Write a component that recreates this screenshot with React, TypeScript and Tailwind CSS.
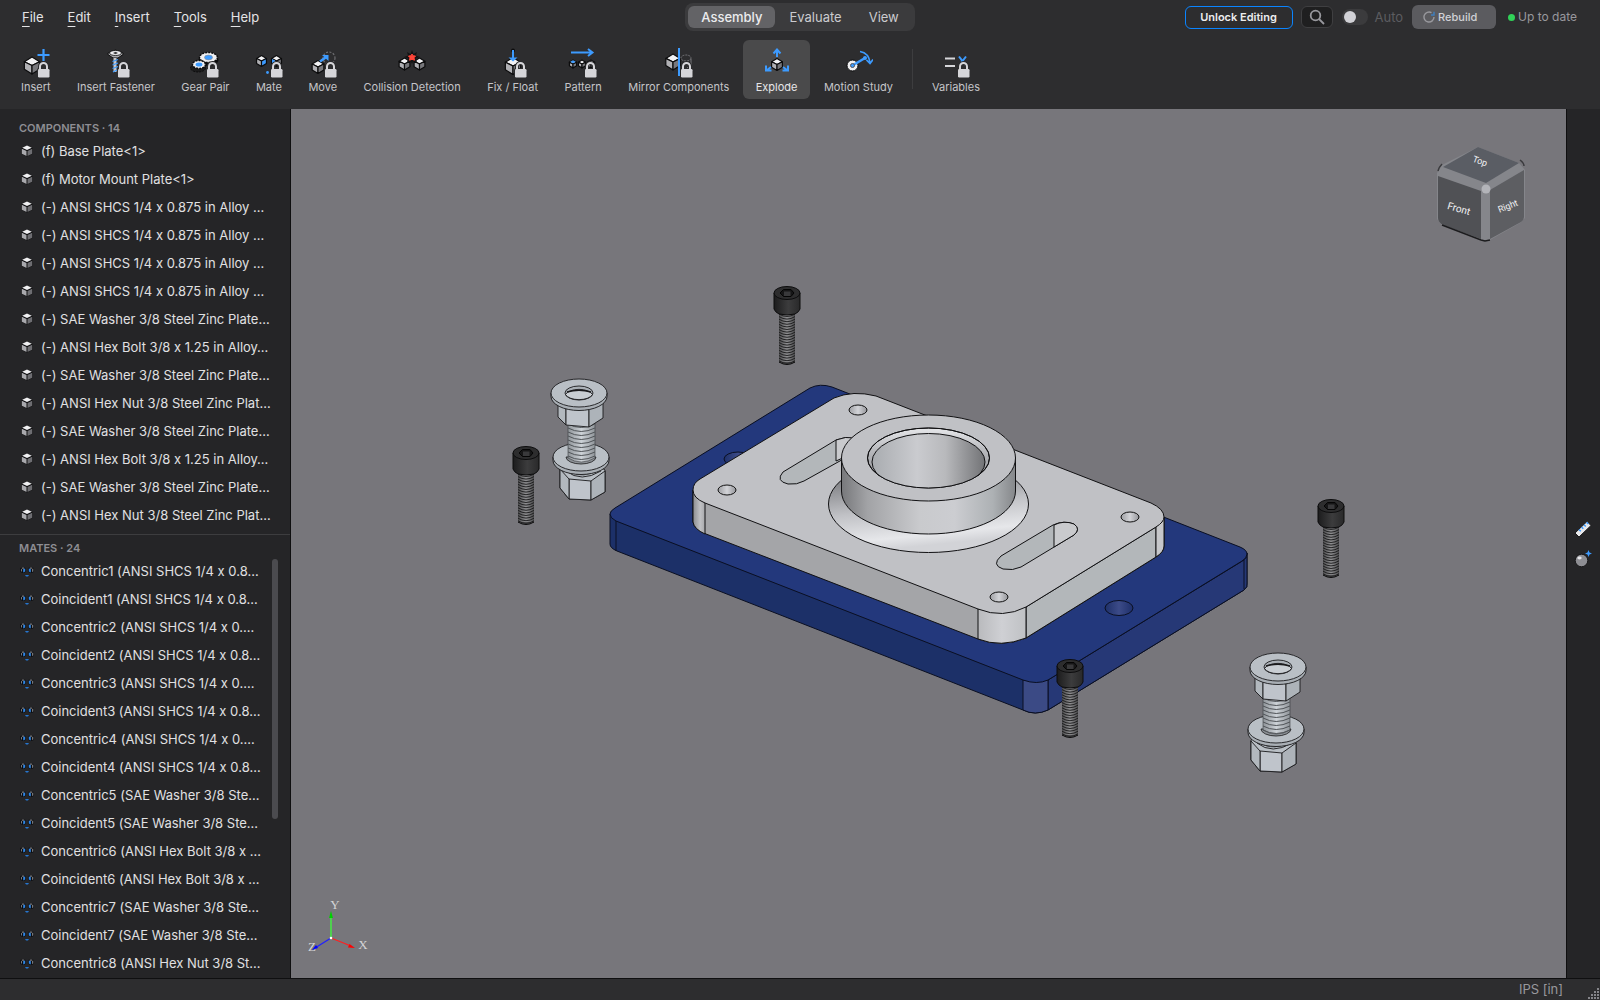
import type { ReactNode } from 'react';
import { useState } from 'react';

const menus = ['File', 'Edit', 'Insert', 'Tools', 'Help'];
const tabs = ['Assembly', 'Evaluate', 'View'];

const components = [
  '(f) Base Plate<1>',
  '(f) Motor Mount Plate<1>',
  '(-) ANSI SHCS 1/4 x 0.875 in Alloy …',
  '(-) ANSI SHCS 1/4 x 0.875 in Alloy …',
  '(-) ANSI SHCS 1/4 x 0.875 in Alloy …',
  '(-) ANSI SHCS 1/4 x 0.875 in Alloy …',
  '(-) SAE Washer 3/8 Steel Zinc Plate…',
  '(-) ANSI Hex Bolt 3/8 x 1.25 in Alloy…',
  '(-) SAE Washer 3/8 Steel Zinc Plate…',
  '(-) ANSI Hex Nut 3/8 Steel Zinc Plat…',
  '(-) SAE Washer 3/8 Steel Zinc Plate…',
  '(-) ANSI Hex Bolt 3/8 x 1.25 in Alloy…',
  '(-) SAE Washer 3/8 Steel Zinc Plate…',
  '(-) ANSI Hex Nut 3/8 Steel Zinc Plat…',
];

const mates = [
  'Concentric1 (ANSI SHCS 1/4 x 0.8…',
  'Coincident1 (ANSI SHCS 1/4 x 0.8…',
  'Concentric2 (ANSI SHCS 1/4 x 0.…',
  'Coincident2 (ANSI SHCS 1/4 x 0.8…',
  'Concentric3 (ANSI SHCS 1/4 x 0.…',
  'Coincident3 (ANSI SHCS 1/4 x 0.8…',
  'Concentric4 (ANSI SHCS 1/4 x 0.…',
  'Coincident4 (ANSI SHCS 1/4 x 0.8…',
  'Concentric5 (SAE Washer 3/8 Ste…',
  'Coincident5 (SAE Washer 3/8 Ste…',
  'Concentric6 (ANSI Hex Bolt 3/8 x …',
  'Coincident6 (ANSI Hex Bolt 3/8 x …',
  'Concentric7 (SAE Washer 3/8 Ste…',
  'Coincident7 (SAE Washer 3/8 Ste…',
  'Concentric8 (ANSI Hex Nut 3/8 St…',
];

const BLUE = '#3d9bff';

function Cube({ x, y, r, right = '#77777b' }: { x: number; y: number; r: number; right?: string }) {
  const w = r * 0.9;
  const h = r * 0.45;
  return (
    <g transform={`translate(${x} ${y})`} stroke="#0c0c0d" strokeWidth="1.2" strokeLinejoin="round">
      <path d={`M0 ${-r}L${w} ${-h}L0 0L${-w} ${-h}Z`} fill="#f2f2f4" />
      <path d={`M${-w} ${-h}L0 0V${r}L${-w} ${h}Z`} fill="#b0b0b4" />
      <path d={`M${w} ${-h}L0 0V${r}L${w} ${h}Z`} fill={right} />
    </g>
  );
}

function Lock() {
  return (
    <g>
      <path d="M19 22V18.500a3.500 3.500 0 0 1 7 0V22" fill="none" stroke="#2d2d2f" strokeWidth="4" />
      <rect x="16" y="20" width="13" height="10" rx="2" fill="#2d2d2f" />
      <path d="M19 22V18.500a3.500 3.500 0 0 1 7 0V22" fill="none" stroke="#d6d6da" strokeWidth="2" />
      <rect x="17" y="21" width="11.500" height="8.500" rx="1.200" fill="#d6d6da" />
    </g>
  );
}

type Tool = { label: string; icon: ReactNode; locked?: boolean; active?: boolean };

const tools: Tool[] = [
  {
    label: 'Insert',
    locked: true,
    icon: (
      <>
        <Cube x={11} y={17.5} r={8.5} />
        <path d="M22.500 1V13M16.500 7H28.500" stroke={BLUE} strokeWidth="2.200" />
      </>
    ),
  },
  {
    label: 'Insert Fastener',
    locked: true,
    icon: (
      <>
        <path d="M7 5L14.500 2L22 5V6.500L17 10H12L7 6.500Z" fill="#a9a9ad" stroke="#0c0c0d" />
        <ellipse cx="14.500" cy="5" rx="6" ry="2.500" fill="#ededf0" stroke="#0c0c0d" strokeWidth=".8" />
        <path d="M12 5l2.500-1.200L17 5l-2.500 1.200Z" fill="#3a3a3c" />
        <path d="M14 10V24" stroke="#c8c8cc" strokeWidth="3" />
        <path d="M11.500 13.500l5.500-2M11.500 17l5.500-2M11.500 20.500l5.500-2M12 24l4-2" stroke={BLUE} strokeWidth="1.300" />
      </>
    ),
  },
  {
    label: 'Gear Pair',
    locked: true,
    icon: (
      <>
        <ellipse cx="8" cy="20" rx="7.500" ry="4" fill="#1b1b1c" stroke="#0c0c0d" strokeDasharray="2 1" />
        <ellipse cx="18.500" cy="12" rx="10" ry="6" fill="#0c0c0d" />
        <ellipse cx="18.500" cy="9.500" rx="9" ry="5" fill="#f0f0f2" stroke="#0c0c0d" strokeWidth="1.500" strokeDasharray="2 1" />
        <ellipse cx="18.500" cy="9.500" rx="4" ry="2.400" fill={BLUE} stroke="#8a8a8e" strokeWidth=".6" />
        <ellipse cx="9" cy="16.500" rx="6.500" ry="4" fill="#f0f0f2" stroke="#0c0c0d" strokeWidth="1.500" strokeDasharray="2 1" />
        <ellipse cx="9" cy="16.500" rx="3.400" ry="2.100" fill={BLUE} />
      </>
    ),
  },
  {
    label: 'Mate',
    locked: true,
    icon: (
      <>
        <Cube x={7.5} y={13} r={5.5} right={BLUE} />
        <Cube x={22.5} y={13} r={5.5} />
        <path d="M18 11l3 1.500v4l-3-1.500z" fill={BLUE} />
        <circle cx="13.500" cy="24.500" r="1.400" fill={BLUE} />
      </>
    ),
  },
  {
    label: 'Move',
    locked: true,
    icon: (
      <>
        <circle cx="21" cy="10" r="6" fill="none" stroke="#6e6e72" strokeWidth="1.200" strokeDasharray="2 1.500" />
        <Cube x={10} y={19} r={6.5} />
        <path d="M12 13.500L19 8.500" stroke={BLUE} strokeWidth="2.500" />
        <path d="M14 7h6.500v6z" fill={BLUE} />
      </>
    ),
  },
  {
    label: 'Collision Detection',
    icon: (
      <>
        <Cube x={7.5} y={16} r={6} />
        <Cube x={22.5} y={16} r={6} />
        <path
          d="M15 2l1.500 4 3.500-2-1 3.500L23 9l-4 1.500 1 4-3.500-1.500L15 16l-1.500-3L10 14.500l1-4L7 9l4-1.500L10 4l3.500 2z"
          fill="#141415"
        />
        <path d="M15 6l1 1.800 2.500.2-1.500 1.800.5 2.400-2.500-.9-2.500.9.5-2.400L11.500 8l2.500-.2z" fill="#ff4539" stroke="#ff4539" />
      </>
    ),
  },
  {
    label: 'Fix / Float',
    locked: true,
    icon: (
      <>
        <Cube x={15} y={18} r={8.5} />
        <circle cx="15" cy="2.500" r="2" fill="#0c0c0d" />
        <path d="M15 2V11" stroke={BLUE} strokeWidth="2" />
        <path d="M10.500 9.500h9L15 13.500z" fill={BLUE} />
      </>
    ),
  },
  {
    label: 'Pattern',
    locked: true,
    icon: (
      <>
        <path d="M3 4.500H24M20 1l4.500 3.500L20 8" fill="none" stroke={BLUE} strokeWidth="2" />
        <Cube x={5} y={16} r={4} />
        <Cube x={14} y={16} r={4} />
        <Cube x={23} y={16} r={4} />
        <path d="M5 12.200l2.800 1.600L5 15.300l-2.800-1.500z" fill={BLUE} />
      </>
    ),
  },
  {
    label: 'Mirror Components',
    locked: true,
    icon: (
      <>
        <Cube x={9} y={14} r={8} />
        <ellipse cx="22" cy="10" rx="5" ry="3" fill="none" stroke="#77777b" strokeDasharray="2 1" />
        <path d="M27 11v6l-4 3" fill="none" stroke="#77777b" />
        <path d="M15 0V28" stroke={BLUE} strokeWidth="2" />
      </>
    ),
  },
  {
    label: 'Explode',
    active: true,
    icon: (
      <>
        <Cube x={15} y={16.5} r={6} />
        <path d="M15 9V2M11.500 5.500L15 1.500l3.500 4" fill="none" stroke={BLUE} strokeWidth="2" />
        <path d="M9 19L4.500 22.500M4 17.500v5h5.500" fill="none" stroke={BLUE} strokeWidth="2" />
        <path d="M21 19L25.500 22.500M26 17.500v5h-5.500" fill="none" stroke={BLUE} strokeWidth="2" />
      </>
    ),
  },
  {
    label: 'Motion Study',
    icon: (
      <>
        <circle cx="9.500" cy="17.500" r="5.500" fill="#f0f0f2" stroke="#0c0c0d" />
        <path d="M9.500 17.500L22 10" stroke={BLUE} strokeWidth="2.600" />
        <circle cx="9.500" cy="17.500" r="2" fill={BLUE} stroke="#55555a" />
        <circle cx="22" cy="10" r="2" fill={BLUE} />
        <path d="M17 3.500Q26 5 27 15M23.500 12l3.500 3.500 3-4" fill="none" stroke={BLUE} strokeWidth="1.700" />
      </>
    ),
  },
  {
    label: 'Variables',
    locked: true,
    icon: (
      <>
        <path d="M4 10.500H14M4 18H14" stroke="#d6d6da" strokeWidth="1.800" />
        <path d="M18 8.500l3.500 4.500L25 8.500M21.500 13l-3 4M21.500 13l3 4" fill="none" stroke={BLUE} strokeWidth="2" />
      </>
    ),
  },
];

function ToolButton({ tool }: { tool: Tool }) {
  return (
    <button
      className={`flex h-[59px] flex-col items-center rounded-md px-[13px] pt-2 ${tool.active ? 'bg-[#4a4a4b] text-[#e6e6e8]' : 'text-[#c5c5c9]'}`}
    >
      <svg viewBox="0 0 30 30" className="-mx-2 h-[30px] w-[30px]" aria-hidden="true">
        {tool.icon}
        {tool.locked && <Lock />}
      </svg>
      <span className="whitespace-nowrap text-[11px] leading-[18px]">{tool.label}</span>
    </button>
  );
}

function Header() {
  const [tab, setTab] = useState('Assembly');
  const [auto, setAuto] = useState(false);

  return (
    <header className="h-[109px] shrink-0 bg-[#2d2d2f]">
      <div className="grid h-[34px] grid-cols-[1fr_auto_1fr] items-center">
        <nav className="flex pl-[10px] pt-[2px] text-[13px] text-[#e4e4e6]">
          {menus.map((menu) => (
            <button key={menu} className="px-3">
              <span className="underline underline-offset-4">{menu[0]}</span>
              {menu.slice(1)}
            </button>
          ))}
        </nav>

        <div className="flex gap-px rounded-lg bg-[#3b3b3d] p-[3px] text-[13px]">
          {tabs.map((name) => (
            <button
              key={name}
              onClick={() => setTab(name)}
              className={`h-[22px] rounded-md px-[13px] pt-[2px] ${tab === name ? 'bg-[#636366] font-medium text-[#ececee]' : 'text-[#cbcbcf]'}`}
            >
              {name}
            </button>
          ))}
        </div>

        <div className="flex items-center justify-end pr-[23px]">
          <button className="mr-2 h-[23px] w-[108px] rounded-md border border-[#0a84ff] text-[11px] font-semibold text-[#ececee]">
            Unlock Editing
          </button>
          <button
            aria-label="Search"
            className="mr-[9px] flex h-[22px] w-8 items-center justify-center rounded-md border border-[#3f3f41] bg-[#1f1f20]"
          >
            <svg viewBox="0 0 16 16" className="h-4 w-4" fill="none" stroke="#98989d" strokeWidth="1.8">
              <circle cx="6.500" cy="6.500" r="4.800" />
              <path d="M10 10l5 5" />
            </svg>
          </button>
          <label className="mr-[9px] flex items-center gap-[7px] text-[13px] text-[#5c5c60]">
            <input
              type="checkbox"
              checked={auto}
              onChange={(e) => setAuto(e.target.checked)}
              className="h-4 w-[26px] appearance-none rounded-full bg-[#3b3b3d] p-[2px] before:block before:h-3 before:w-3 before:rounded-full before:bg-[#d1d1d6] before:content-[''] checked:bg-[#0a84ff] checked:before:ml-[10px]"
            />
            <span className="pt-[2px]">Auto</span>
          </label>
          <button className="mr-3 flex h-6 w-[84px] items-center gap-[3px] rounded-md bg-[#5b5b5f] pl-[11px] text-[11px] font-medium text-[#d1d1d6]">
            <svg viewBox="0 0 12 12" className="h-3 w-3" fill="none" strokeWidth="1.4">
              <path d="M8.500 1.700A5 5 0 1 0 11 6" stroke="#98989d" />
              <path d="M8 4h3V.800" stroke="#3f7fbf" />
            </svg>
            Rebuild
          </button>
          <span className="mr-[3px] h-[7px] w-[7px] rounded-full bg-[#30d158]"></span>
          <span className="text-xs text-[#98989d]">Up to date</span>
        </div>
      </div>

      <div className="flex pl-2 pt-[6px]">
        <div className="flex w-[898px] justify-between">
          {tools.slice(0, 11).map((tool) => (
            <ToolButton key={tool.label} tool={tool} />
          ))}
        </div>
        <div className="mx-[6px] mt-[9px] h-10 w-px bg-[#3d3d3f]"></div>
        <ToolButton tool={tools[11]} />
      </div>
    </header>
  );
}

function PartIcon() {
  return (
    <svg viewBox="0 0 12 12" className="h-3 w-3 shrink-0" aria-hidden="true">
      <path d="M6 .500L11.500 3v6L6 11.500.500 9V3z" fill="#0c0c0d" />
      <path d="M6 .600l4.800 2.200L6 5 1.200 2.800z" fill="#f0f0f2" />
      <path d="M.800 3.800l4.700 2.100v5L.800 8.800z" fill="#a9a9ad" />
      <path d="M11.200 3.800L6.500 5.900v5l4.700-2.100z" fill="#6e6e72" />
    </svg>
  );
}

function MateIcon() {
  return (
    <svg viewBox="0 0 14 12" className="h-3 w-[14px] shrink-0" aria-hidden="true">
      <path d="M3 2l2.800 1v4L3 8 .300 7V3zM11 2l2.800 1v4L11 8 8.300 7V3z" fill="#0c0c0d" />
      <path d="M1.500 3l1.500-.6 1.500.6L3 3.800zM9.500 3l1.500-.6 1.500.6-1.500.8z" fill="#b0b0b4" />
      <path d="M3.200 4l2-.6v3l-2 1zM10.800 4l-2-.6v3l2 1z" fill="#2f86e6" />
      <path d="M12 4l1.300-.4v2.800L12 7zM1 3.800l1 .4v2.600L1 6.300z" fill="#77777b" />
      <path d="M5 10h4l-1 1.400H6z" fill="#2676cf" />
    </svg>
  );
}

function TreeList({ items, icon, indent }: { items: string[]; icon: ReactNode; indent: string }) {
  return (
    <ul>
      {items.map((item, index) => (
        <li key={index} className={`flex h-7 items-center ${indent} text-[13px] text-[#e0e0e2]`}>
          {icon}
          <span className="truncate pt-[2px]">{item}</span>
        </li>
      ))}
    </ul>
  );
}

function Sidebar() {
  return (
    <aside className="flex w-[291px] shrink-0 flex-col border-r border-[#0f0f10] bg-[#252527]">
      <section className="shrink-0 border-b border-[#3d3d3f] pb-[5px] pt-[9px]">
        <h2 className="h-[19px] pl-[19px] text-[11px] font-semibold leading-[20px] text-[#8e8e93]">
          COMPONENTS · {components.length}
        </h2>
        <TreeList items={components} icon={<PartIcon />} indent="gap-2 pl-[21px]" />
      </section>
      <section className="relative min-h-0 flex-1 overflow-hidden pt-[3px]">
        <h2 className="h-[19px] pl-[19px] text-[11px] font-semibold leading-[20px] text-[#8e8e93]">MATES · 24</h2>
        <TreeList items={mates} icon={<MateIcon />} indent="gap-[7px] pl-5" />
        <div className="absolute right-3 top-6 h-[260px] w-[6px] rounded-full bg-[#4b4b4f]"></div>
      </section>
    </aside>
  );
}

// socket head cap screw, origin at the centre of the head's top face
function CapScrew({ x, y }: { x: number; y: number }) {
  return (
    <g transform={`translate(${x} ${y})`}>
      <rect x="-8" y="17" width="16" height="53" fill="url(#threadDark)" />
      <path d="M-8 69Q0 74 8 69" fill="#58585a" stroke="#0c0c0d" />
      {Array.from({ length: 19 }, (_, i) => (
        <path key={i} d={`M-8 ${21 + i * 2.6}Q0 ${26 + i * 2.6} 8 ${21 + i * 2.6}`} fill="none" stroke="#1a1a1b" strokeWidth=".9" />
      ))}
      <path d="M-13 0V16Q-12 19 -8 21Q0 23 8 21Q12 19 13 16V0Z" fill="url(#headDark)" stroke="#0c0c0d" />
      <ellipse rx="13" ry="6.500" fill="#2d2d2e" stroke="#0c0c0d" />
      <path d="M-7 0L-3.500-3.500H4L7 0 4 3.500H-3.500Z" fill="#161617" stroke="#050505" />
      <path d="M-3 3V-1.500H3.500V3Z" fill="#39393b" />
    </g>
  );
}

function Washer({ x, y, hole }: { x: number; y: number; hole?: boolean }) {
  return (
    <g transform={`translate(${x} ${y})`} stroke="#1a1a1c" strokeWidth=".9">
      <path d="M-28 0V3.500A28 14 0 0 0 28 3.500V0Z" fill="#a9afb5" />
      <ellipse rx="28" ry="14" fill="#b9bfc5" />
      {hole && (
        <>
          <ellipse rx="14" ry="7" fill="#aab0b6" />
          <path d="M-13.500 1.500A14 7 0 0 1 13.500 1.500A14 7 0 0 1 -13.500 1.500Z" fill="#c9ced3" />
          <path d="M-12-1Q0-4.500 12-1" fill="none" strokeWidth="1.500" />
        </>
      )}
    </g>
  );
}

// washer + nut on top, washer + bolt head below, joined by the shank
function BoltStack({ x, y, nutX, lowX, lowY, headX }: { x: number; y: number; nutX: number; lowX: number; lowY: number; headX: number }) {
  return (
    <g transform={`translate(${x} ${y})`}>
      <g transform={`translate(${lowX + headX} ${lowY})`} stroke="#1a1a1c" strokeWidth=".9" strokeLinejoin="round">
        <path d="M-21 11L-12 5H12L24 13V35L10 43L-12 42L-21 31Z" fill="#b9bfc5" />
        <path d="M-12 22L10 24V43L-12 42Z" fill="#bfc4cb" />
        <path d="M10 24L24 14V35L10 43Z" fill="#adb3b9" />
        <path d="M-21 12L-12 22V42L-21 31Z" fill="#b2b8be" />
        <path d="M-15 14Q0 26 20 14" fill="none" />
        <path d="M-10 15Q2 22 16 13" fill="none" stroke="#55585c" />
      </g>
      <Washer x={lowX} y={lowY} />
      <path d={`M${lowX - 15} ${lowY}A15 7 0 0 0 ${lowX + 15} ${lowY}Z`} fill="#8d9297" stroke="#1a1a1c" strokeWidth=".8" />
      <path d={`M${lowX - 13} 28V${lowY + 1}Q${lowX} ${lowY + 9} ${lowX + 14} ${lowY + 1}V28Z`} fill="url(#thread)" stroke="#3a3c3f" strokeWidth=".6" />
      {Array.from({ length: 9 }, (_, i) => (
        <path
          key={i}
          d={`M${lowX - 13} ${31 + i * 4}Q${lowX} ${38 + i * 4} ${lowX + 14} ${31 + i * 4}`}
          fill="none"
          stroke="#505458"
          strokeWidth="1"
        />
      ))}
      <g transform={`translate(${nutX} 0)`} stroke="#1a1a1c" strokeWidth=".9" strokeLinejoin="round">
        <path d="M-21 8V24L-13 32V10Z" fill="#b2b8be" />
        <path d="M-13 10V32L10 34V10Z" fill="#bfc4cb" />
        <path d="M10 10V34L24 25V8Z" fill="#adb3b9" />
      </g>
      <Washer x={0} y={0} hole />
    </g>
  );
}

function SmallHole({ x, y }: { x: number; y: number }) {
  return (
    <ellipse cx={x} cy={y} rx="9" ry="5" fill="url(#hole)" stroke="#111" />
  );
}

function Model() {
  return (
    <svg viewBox="291 109 1275 869" className="h-full w-full" role="img" aria-label="Exploded motor mount assembly">
      <defs>
        <linearGradient id="headDark">
          <stop offset="0" stopColor="#1c1c1d" />
          <stop offset=".55" stopColor="#3c3c3d" />
          <stop offset="1" stopColor="#29292a" />
        </linearGradient>
        <linearGradient id="threadDark">
          <stop offset="0" stopColor="#4a4a4c" />
          <stop offset=".5" stopColor="#909092" />
          <stop offset="1" stopColor="#4a4a4c" />
        </linearGradient>
        <linearGradient id="thread">
          <stop offset="0" stopColor="#8f9499" />
          <stop offset=".5" stopColor="#cdd2d7" />
          <stop offset="1" stopColor="#8f9499" />
        </linearGradient>
        <linearGradient id="hole">
          <stop offset="0" stopColor="#9d9ea2" />
          <stop offset=".5" stopColor="#d3d4d8" />
          <stop offset="1" stopColor="#94959a" />
        </linearGradient>
        <linearGradient id="blueHole">
          <stop offset="0" stopColor="#1e3069" />
          <stop offset=".5" stopColor="#3c4b88" />
          <stop offset="1" stopColor="#1e2f6a" />
        </linearGradient>
        <linearGradient id="boss">
          <stop offset="0" stopColor="#77787b" />
          <stop offset=".15" stopColor="#a2a3a6" />
          <stop offset=".45" stopColor="#c9cacd" />
          <stop offset=".65" stopColor="#cccdd1" />
          <stop offset=".87" stopColor="#adb1b4" />
          <stop offset="1" stopColor="#85878a" />
        </linearGradient>
        <linearGradient id="bore">
          <stop offset="0" stopColor="#a9acb0" />
          <stop offset=".4" stopColor="#cacbcf" />
          <stop offset=".65" stopColor="#b8b9bc" />
          <stop offset="1" stopColor="#727376" />
        </linearGradient>
        <linearGradient id="fillet" x1="0" y1="0.3" x2="0.15" y2="1">
          <stop offset="0" stopColor="#85868a" />
          <stop offset=".45" stopColor="#c0c1c5" />
          <stop offset=".85" stopColor="#e6e7ea" />
          <stop offset="1" stopColor="#d2d3d7" />
        </linearGradient>
        <linearGradient id="chamfer" x1="0" y1="0" x2="0" y2="1">
          <stop offset="0" stopColor="#e6e7ea" />
          <stop offset=".4" stopColor="#b5b6ba" />
          <stop offset="1" stopColor="#8b8c90" />
        </linearGradient>
        <linearGradient id="corner">
          <stop offset="0" stopColor="#b9babd" />
          <stop offset=".5" stopColor="#cfd0d4" />
          <stop offset="1" stopColor="#bfc1c4" />
        </linearGradient>
        <linearGradient id="leftCorner">
          <stop offset="0" stopColor="#8c8d90" />
          <stop offset=".6" stopColor="#c0c1c4" />
          <stop offset="1" stopColor="#a8a9ac" />
        </linearGradient>
      </defs>

      {/* base plate */}
      <g stroke="#0a0f22" strokeWidth="1" strokeLinejoin="round">
        <path d="M610 514V544Q610 548 617 551L1023 710Q1035 716 1048 710L1244 590Q1248 587 1247 583V553Z" fill="#1c3068" />
        <path d="M1048 680L1244 560Q1247 558 1247 553V583Q1248 587 1244 590L1048 710Z" fill="#263876" />
        <path d="M1023 680V710Q1035 716 1048 710V680Z" fill="#3b4a85" />
        <path
          d="M610 514Q610 511 615 508L810 388Q820 383 832 387L1240 547Q1247 550 1247 554Q1247 558 1242 561L1048 680Q1037 685 1023 680L616 521Q610 518 610 514Z"
          fill="#23387c"
        />
        <path d="M616 521V551M1244 560V589" />
        <ellipse cx="738" cy="459" rx="14" ry="7" fill="url(#blueHole)" />
        <ellipse cx="1119" cy="608" rx="14" ry="7.500" fill="url(#blueHole)" />
      </g>

      {/* motor mount plate */}
      <g stroke="#111113" strokeWidth="1" strokeLinejoin="round">
        <path d="M693 490V522Q694 529 706 534L978 639Q1001 648 1026 638L1156 557Q1164 552 1164 546V517Z" fill="#a4a5a8" />
        <path d="M693 490V522Q694 529 705 534V503Z" fill="url(#leftCorner)" />
        <path d="M1026 607L1156 527V557L1026 638Z" fill="#b3b7ba" />
        <path d="M1156 527L1164 517V546Q1164 552 1156 557Z" fill="#c6c7ca" />
        <path d="M978 609V639Q1001 648 1026 638V607Z" fill="url(#corner)" />
        <path
          d="M693 490Q693 483 700 479L834 398Q853 390 876 396L1151 503Q1164 509 1164 517Q1164 522 1156 527L1026 607Q1003 619 978 609L705 503Q693 498 693 490Z"
          fill="#c0c1c5"
        />
        <SmallHole x={858} y={410} />
        <SmallHole x={727} y={490} />
        <SmallHole x={1130} y={517} />
        <SmallHole x={999} y={597} />

        <path d="M783 472L836 440Q845 436 856 438V452L804 481Q797 485 788 484Q775 481 783 472Z" fill="#b3b7ba" />
        <path d="M836 440Q845 436 856 438V452L836 461Z" fill="#c9cacd" />
        <path d="M1001 556L1053 525Q1064 520 1074 524Q1081 529 1074 535L1021 567Q1013 571 1003 569Q991 565 1001 556Z" fill="#b3b7ba" />
        <path d="M1054 525Q1064 520 1074 524Q1081 529 1074 535L1054 547Z" fill="#c9cacd" />

        <ellipse cx="928.500" cy="504" rx="100" ry="48.500" fill="url(#fillet)" />
        <path d="M841.500 458V491A87 43 0 0 0 1015.500 491V458Z" fill="url(#boss)" />
        <ellipse cx="928.500" cy="458" rx="87" ry="43" fill="#c0c1c5" />
        <ellipse cx="928.500" cy="458" rx="61" ry="30" fill="url(#chamfer)" />
        <clipPath id="boreClip">
          <ellipse cx="928.500" cy="458" rx="61" ry="30" />
        </clipPath>
        <ellipse cx="928.500" cy="462" rx="56.500" ry="28.500" fill="url(#bore)" clipPath="url(#boreClip)" />
        <ellipse cx="928.500" cy="458" rx="61" ry="30" fill="none" />
      </g>

      <BoltStack x={579} y={393} nutX={0} lowX={2} lowY={64} headX={0} />
      <BoltStack x={1278} y={667} nutX={-2} lowX={-2} lowY={62} headX={-4} />
      <CapScrew x={787} y={293} />
      <CapScrew x={526} y={453} />
      <CapScrew x={1070} y={666} />
      <CapScrew x={1331} y={506} />
    </svg>
  );
}

function ViewCube() {
  return (
    <svg viewBox="0 0 104 112" className="absolute right-8 top-7 h-[112px] w-[104px]" aria-label="View cube">
      <path d="M48 10L89 26 95 33V81L90 86 60 103 52 104 12 88 7 82V36L12 28Z" fill="#85868b" />
      <path d="M48 10L89 26 56 46 13 30Z" fill="#5a5d64" />
      <path d="M8 39L51 54V102L13 88Q8 85 8 81Z" fill="#505155" />
      <path d="M60 53L94 33V80Q94 83 91 85L60 102Z" fill="#5d5e62" />
      <path d="M12 88L51 103 55 104 60 103" fill="none" stroke="#1c1c1e" strokeWidth="1.5" />
      <path d="M8 34Q9 30 12 27M90 23Q94 26 94 29" fill="none" stroke="#3a3a3d" strokeWidth="1.500" />
      <circle cx="56" cy="52" r="4.500" fill="#b3b4b9" />
      <g fill="#f2f2f4" fontSize="10" fontFamily="Roboto, 'Noto Sans', sans-serif" textAnchor="middle">
        <text transform="translate(49 27) rotate(20)" fontSize="9">
          Top
        </text>
        <text transform="translate(28 75) rotate(16)">Front</text>
        <text transform="translate(79 72) rotate(-22)" fontSize="9">
          Right
        </text>
      </g>
    </svg>
  );
}

function AxisTriad() {
  return (
    <svg viewBox="0 0 72 72" className="absolute bottom-4 left-3 h-[72px] w-[72px]" aria-label="Axis triad">
      <path d="M28 48V24" stroke="#4fd04f" strokeWidth="2" />
      <path d="M28 21l2 7h-4z" fill="#00d000" />
      <path d="M28 48L48 56" stroke="#ff2020" strokeWidth="1.300" />
      <path d="M52 58l-7-.5 1.500-3.500z" fill="#ff0000" />
      <path d="M28 48L12 58" stroke="#2020ff" strokeWidth="1.300" />
      <path d="M9 60l4-5 2 3z" fill="#0000ff" />
      <circle cx="28" cy="48" r="1.300" fill="#fff" />
      <g fill="#d4d4d6" fontSize="13" fontFamily="'Liberation Serif', serif" textAnchor="middle">
        <text x="32" y="19">Y</text>
        <text x="60" y="59">X</text>
        <text x="9" y="61">Z</text>
      </g>
    </svg>
  );
}

function Dock() {
  return (
    <aside className="flex w-[34px] shrink-0 flex-col items-center justify-center gap-3 border-l border-[#0f0f10] bg-[#252527] pr-px">
      <button aria-label="Measure">
        <svg viewBox="0 0 18 18" className="h-[18px] w-[18px]">
          <path d="M1 13L13 1.500 17 5.500 5 17Z" fill="#e8e8ea" stroke="#1a1a1b" />
          <path d="M5 9.500l1.800 1.800M7.500 7l1.800 1.800M10 4.700l1.800 1.800M12.500 2.300L14.300 4" stroke={BLUE} strokeWidth="1.500" />
        </svg>
      </button>
      <button aria-label="Appearance">
        <svg viewBox="0 0 18 18" className="h-[18px] w-[18px]">
          <circle cx="7.500" cy="10.500" r="6.300" fill="#8e8e93" stroke="#161617" />
          <ellipse cx="5.500" cy="8" rx="2.200" ry="1.400" fill="#e6e6ea" />
          <path d="M14.500 0l1 2.500L18 3.500l-2.500 1-1 2.500-1-2.500-2.500-1 2.500-1z" fill={BLUE} />
        </svg>
      </button>
    </aside>
  );
}

function StatusBar() {
  return (
    <footer className="relative flex h-[22px] shrink-0 items-center justify-end border-t border-[#0f0f10] bg-[#2d2d2f] pr-[37px] text-[13px] text-[#98989d]">
      IPS [in]
      <svg viewBox="0 0 12 12" className="absolute bottom-0 right-0 h-3 w-3" fill="#85858a" aria-hidden="true">
        <path d="M9 0h2v2H9zM6 3h2v2H6zM9 3h2v2H9zM3 6h2v2H3zM6 6h2v2H6zM9 6h2v2H9zM0 9h2v2H0zM3 9h2v2H3zM6 9h2v2H6zM9 9h2v2H9z" />
      </svg>
    </footer>
  );
}

export default function App() {
  return (
    <div className="flex h-screen flex-col overflow-hidden bg-[#2d2d2f] font-['Inter',sans-serif] [font-feature-settings:'calt'_0]">
      <Header />
      <div className="flex min-h-0 flex-1">
        <Sidebar />
        <main className="relative min-w-0 flex-1 bg-[#77767b]">
          <Model />
          <ViewCube />
          <AxisTriad />
        </main>
        <Dock />
      </div>
      <StatusBar />
    </div>
  );
}
